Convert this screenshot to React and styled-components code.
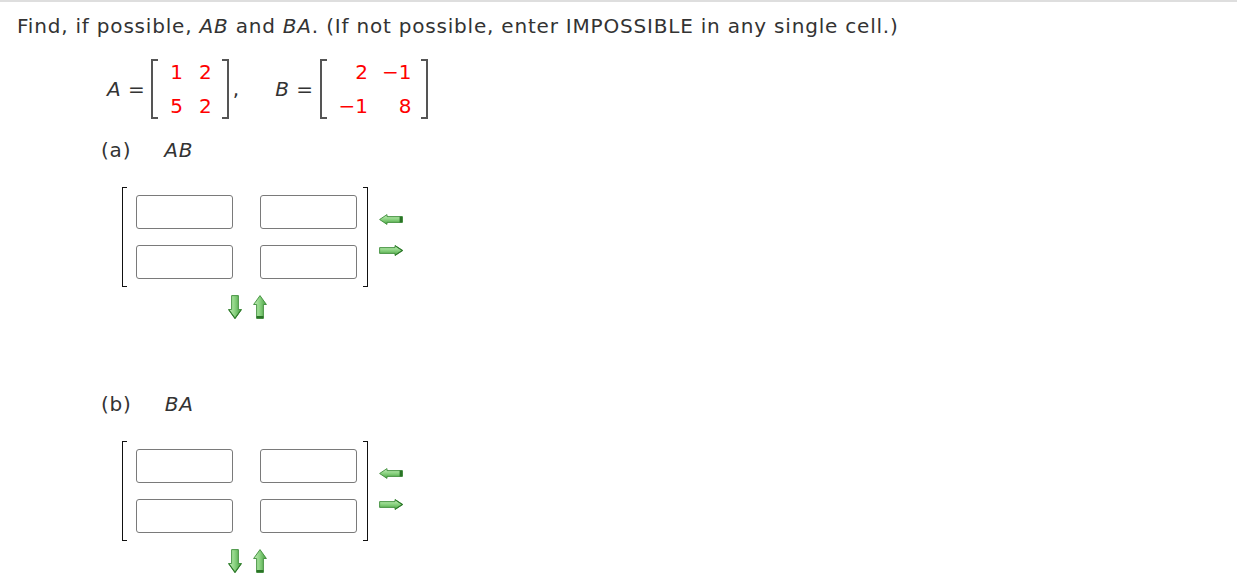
import React from "react";
import styled, { createGlobalStyle } from "styled-components";

const GlobalStyle = createGlobalStyle`
  html, body {
    margin: 0;
    padding: 0;
    background: #fff;
  }
  body {
    font-family: "DejaVu Sans", Verdana, sans-serif;
    color: #333;
  }
`;

const Page = styled.div`
  border-top: 2px solid #dedede;
  padding: 12px 17px 0;
`;

const Prompt = styled.div`
  font-size: 20px;
  line-height: 24px;
  letter-spacing: 0.8px;
`;

const Var = styled.i`
  font-style: italic;
`;

const Givens = styled.div`
  display: flex;
  align-items: center;
  margin: 21px 0 0 90px;
  font-size: 20px;
`;

const Given = styled.div`
  display: flex;
  align-items: center;
  margin-right: ${(p) => p.$gap || 0}px;
`;

const Eq = styled.span`
  margin-right: 6px;
  letter-spacing: 0.5px;
`;

const Bracket = styled.div`
  align-self: stretch;
  width: ${(p) => p.$w || 5}px;
  border: ${(p) => p.$t || 2}px solid ${(p) => p.$color || "#555"};
  ${(p) => (p.$side === "left" ? "border-right: none;" : "border-left: none;")}
`;

const Entries = styled.div`
  display: grid;
  grid-template-columns: repeat(2, auto);
  grid-auto-rows: 26px;
  row-gap: 8px;
  column-gap: ${(p) => p.$colGap}px;
  padding: 0 ${(p) => p.$padR}px 0 ${(p) => p.$padL}px;
  color: #ff0000;
  line-height: 26px;
  text-align: right;
`;

const Comma = styled.span`
  align-self: center;
  margin-left: 4px;
`;

const Part = styled.section`
  margin-top: ${(p) => p.$top}px;
`;

const PartLabel = styled.div`
  display: flex;
  gap: 33px;
  margin-left: 84px;
  font-size: 20px;
  line-height: 24px;
  letter-spacing: 0.8px;
`;

const AnswerRow = styled.div`
  display: flex;
  align-items: flex-start;
  margin: 25px 0 0 105px;
`;

const AnswerColumn = styled.div`
  display: flex;
  flex-direction: column;
  align-items: center;
`;

const MatrixFrame = styled.div`
  display: flex;
  height: 100px;
`;

const Cells = styled.div`
  display: grid;
  grid-template-columns: repeat(2, 97px);
  grid-auto-rows: 34px;
  column-gap: 27px;
  row-gap: 16px;
  padding: 8px 6px 0 9px;
`;

const Cell = styled.input`
  box-sizing: border-box;
  width: 97px;
  height: 34px;
  border: 1px solid #7a7a7a;
  border-radius: 3px;
  background: #fff;
  outline: none;
  font-family: inherit;
  font-size: 16px;
`;

const SideArrows = styled.div`
  display: flex;
  flex-direction: column;
  gap: 20px;
  margin: 27px 0 0 11px;
`;

const StackArrows = styled.div`
  display: flex;
  gap: 11px;
  margin: 8px 0 0 5px;
`;

const ArrowSvg = styled.svg`
  display: block;
`;

const Grad = ({ id, x2 = "0", y2 = "1", stops }) => (
  <linearGradient id={id} x1="0" y1="0" x2={x2} y2={y2}>
    {stops.map(([o, c]) => (
      <stop key={o} offset={o} stopColor={c} />
    ))}
  </linearGradient>
);

const HArrow = ({ dir, uid }) => {
  const d =
    dir === "left"
      ? "M0.6 5.5 L8 0.6 L8 2.6 L23.4 2.6 L23.4 8.4 L8 8.4 L8 10.4 Z"
      : "M23.4 5.5 L16 0.6 L16 2.6 L0.6 2.6 L0.6 8.4 L16 8.4 L16 10.4 Z";
  return (
    <ArrowSvg width="24" height="11" viewBox="0 0 24 11">
      <defs>
        <Grad
          id={`h${uid}`}
          stops={[
            ["0", "#c8efc0"],
            ["0.45", "#8fd585"],
            ["1", "#4aa544"],
          ]}
        />
      </defs>
      <path d={d} fill={`url(#h${uid})`} stroke="#3d8c39" strokeWidth="0.9" strokeLinejoin="round" />
      {dir === "left" ? (
        <rect x="20.6" y="2.6" width="2.8" height="5.8" fill="#2a7326" />
      ) : (
        <path d="M16 0.6 L23.4 5.5 L16 10.4" fill="none" stroke="#2f7a2b" strokeWidth="1.1" strokeLinejoin="round" />
      )}
    </ArrowSvg>
  );
};

const VArrow = ({ dir, uid }) => {
  const d =
    dir === "down"
      ? "M3.6 0.6 H10.4 V14.5 H13.4 L7 23.4 L0.6 14.5 H3.6 Z"
      : "M3.6 23.4 H10.4 V9.5 H13.4 L7 0.6 L0.6 9.5 H3.6 Z";
  return (
    <ArrowSvg width="14" height="24" viewBox="0 0 14 24">
      <defs>
        <Grad
          id={`v${uid}`}
          x2="1"
          y2="0"
          stops={[
            ["0", "#c3ebbb"],
            ["0.45", "#8fd585"],
            ["1", "#45a040"],
          ]}
        />
      </defs>
      <path d={d} fill={`url(#v${uid})`} stroke="#3d8c39" strokeWidth="0.9" strokeLinejoin="round" />
      {dir === "up" ? (
        <rect x="3.6" y="21" width="6.8" height="2.4" fill="#2a7326" />
      ) : (
        <path d="M0.6 14.5 L7 23.4 L13.4 14.5" fill="none" stroke="#2f7a2b" strokeWidth="1.1" strokeLinejoin="round" />
      )}
    </ArrowSvg>
  );
};

const GivenMatrix = ({ name, rows, colGap, padL, padR, comma, gap }) => (
  <Given $gap={gap}>
    <Eq>
      <Var>{name}</Var> =
    </Eq>
    <Bracket $side="left" />
    <Entries $colGap={colGap} $padL={padL} $padR={padR}>
      {rows.flat().map((v, i) => (
        <span key={i}>{v}</span>
      ))}
    </Entries>
    <Bracket $side="right" />
    {comma && <Comma>,</Comma>}
  </Given>
);

const AnswerPart = ({ letter, product, top, uid }) => (
  <Part $top={top}>
    <PartLabel>
      <span>({letter})</span>
      <Var>{product}</Var>
    </PartLabel>
    <AnswerRow>
      <AnswerColumn>
        <MatrixFrame>
          <Bracket $side="left" $t={1} $w={4} $color="#111" />
          <Cells>
            {[0, 1, 2, 3].map((i) => (
              <Cell key={i} type="text" aria-label={`${product} cell ${i + 1}`} />
            ))}
          </Cells>
          <Bracket $side="right" $t={1} $w={4} $color="#111" />
        </MatrixFrame>
        <StackArrows>
          <VArrow dir="down" uid={`${uid}d`} />
          <VArrow dir="up" uid={`${uid}u`} />
        </StackArrows>
      </AnswerColumn>
      <SideArrows>
        <HArrow dir="left" uid={`${uid}l`} />
        <HArrow dir="right" uid={`${uid}r`} />
      </SideArrows>
    </AnswerRow>
  </Part>
);

export default function App() {
  return (
    <>
      <GlobalStyle />
      <Page>
        <Prompt>
          Find, if possible, <Var>AB</Var> and <Var>BA</Var>. (If not possible, enter
          IMPOSSIBLE in any single cell.)
        </Prompt>
        <Givens>
          <GivenMatrix
            name="A"
            rows={[["1", "2"], ["5", "2"]]}
            colGap={16}
            padL={12}
            padR={10}
            comma
            gap={36}
          />
          <GivenMatrix
            name="B"
            rows={[["2", "−1"], ["−1", "8"]]}
            colGap={14}
            padL={12}
            padR={10}
          />
        </Givens>
        <AnswerPart letter="a" product="AB" top={19} uid="a" />
        <AnswerPart letter="b" product="BA" top={73} uid="b" />
      </Page>
    </>
  );
}
